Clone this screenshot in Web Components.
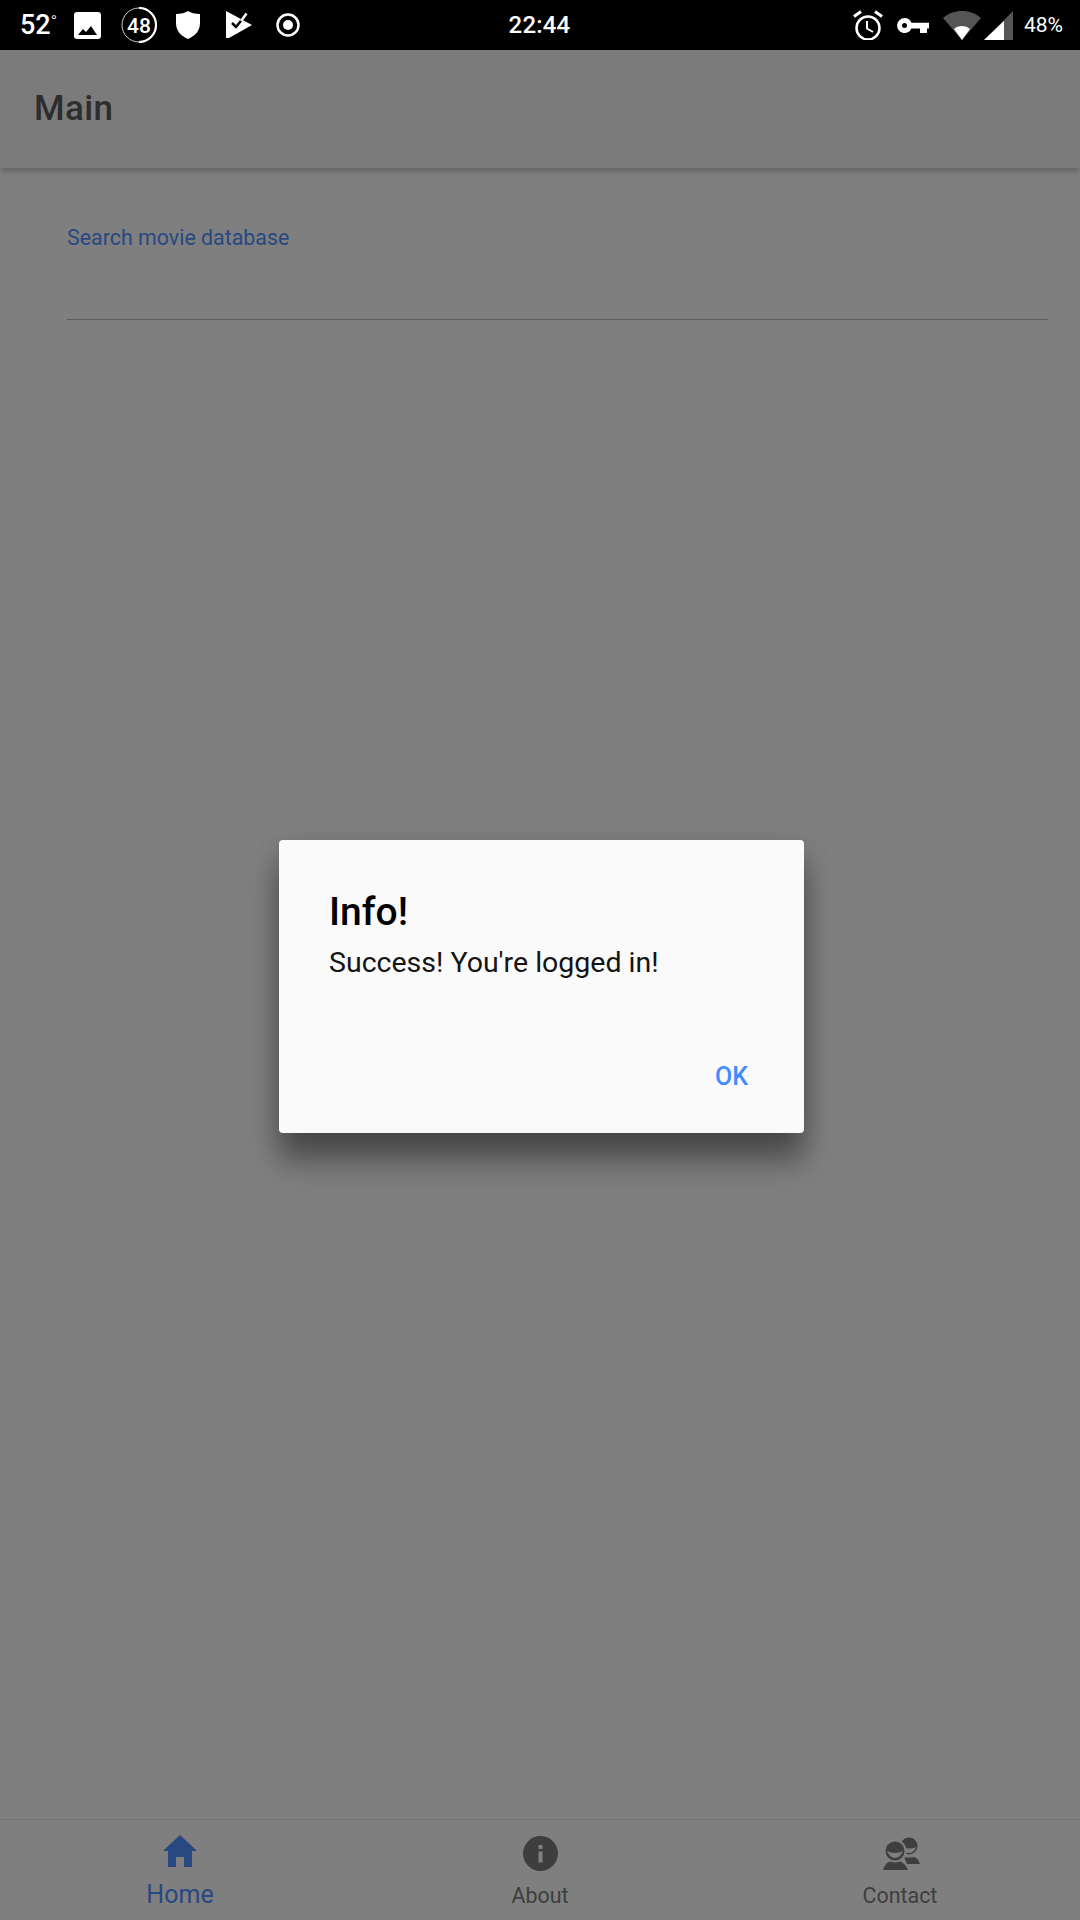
<!DOCTYPE html>
<html>
<head>
<meta charset="utf-8">
<title>Main</title>
<style>
  html, body { margin: 0; height: 100%; }
  body { background: #fafafa; font-family: Roboto, "Liberation Sans", sans-serif; }
  #app { display: flex; flex-direction: column; height: 1920px; position: relative; overflow: hidden; }
</style>
</head>
<body>
<div id="app">
  <status-bar></status-bar>
  <app-bar>Main</app-bar>
  <search-field>Search movie database</search-field>
  <bottom-nav>
    <nav-item active label="Home" style="--icon-bottom:4px">
      <svg slot="icon" width="34" height="32" viewBox="0 0 34 32"><path fill="currentColor" d="M17 0 34 16H29V32H21V22H13V32H5V16H0Z"/></svg>
    </nav-item>
    <nav-item label="About">
      <svg slot="icon" width="35" height="35" viewBox="0 0 35 35"><path fill="currentColor" fill-rule="evenodd" d="M17.500 0a17.500 17.500 0 1 0 0 35 17.500 17.500 0 0 0 0-35ZM15.500 9h4v4h-4ZM15.500 15.500h4v11h-4Z"/></svg>
    </nav-item>
    <nav-item label="Contact" style="--icon-bottom:1px">
      <svg slot="icon" style="margin-left:3px" width="38" height="33" viewBox="0 0 38 33">
        <circle cx="26" cy="9" r="8.500" fill="currentColor"/>
        <path fill="#fafafa" d="M19 10Q26 13 33 10Q31 16 26 16Q21 16 19 10Z"/>
        <path fill="currentColor" d="M21 20Q26 21 31 20Q35 21 37 27H24Z"/>
        <circle cx="12" cy="14" r="11.500" fill="#fafafa"/>
        <circle cx="12" cy="14" r="9.500" fill="currentColor"/>
        <path fill="#fafafa" d="M4 14Q12 18 20 14Q17 21 12 21Q7 21 4 14Z"/>
        <path fill="currentColor" d="M7 24.500Q12 26.500 17 24.500Q22 26 25 33H0Q2 26 7 24.500Z"/>
      </svg>
    </nav-item>
  </bottom-nav>
  <alert-dialog heading="Info!" action="OK">Success! You're logged in!</alert-dialog>
</div>

<script>
class StatusBar extends HTMLElement {
  constructor() {
    super();
    this.attachShadow({ mode: 'open' });
    this.shadowRoot.innerHTML = `
      <style>
        :host {
          display: flex;
          align-items: center;
          height: 50px;
          flex: none;
          background: #000;
          color: #fff;
          font-family: Roboto, sans-serif;
          position: relative;
          z-index: 2;
        }
        .left, .right { display: flex; align-items: center; flex: 1; }
        .right { justify-content: flex-end; padding-right: 17px; }
        .left { padding-left: 20px; }
        .temp { font-size: 27px; font-weight: 500; width: 54px; }
        .temp sup { font-size: 17px; font-weight: 300; vertical-align: 7px; line-height: 0; }
        .clock { font-size: 24px; font-weight: 500; letter-spacing: .2px; margin-right: 4px; }
        .batt { font-size: 21px; margin-left: 11px; }
        svg { display: block; flex: none; fill: #fff; }
      </style>
      <div class="left">
        <span class="temp">52<sup>°</sup></span>
        <svg width="27" height="27" viewBox="0 0 27 27"><path fill-rule="evenodd" d="M3 0h21a3 3 0 0 1 3 3v21a3 3 0 0 1-3 3H3a3 3 0 0 1-3-3V3a3 3 0 0 1 3-3ZM4 23h19l-6-9-5 6-3-3Z"/></svg>
        <svg style="margin-left:20px" width="36" height="36" viewBox="0 0 36 36">
          <circle cx="18" cy="18" r="17" fill="none" stroke="#fff" stroke-width=".8"/>
          <path d="M18 1a17 17 0 0 1 0 34" fill="none" stroke="#fff" stroke-width="2.200"/>
          <text x="18" y="25.500" text-anchor="middle" font-family="Roboto, sans-serif" font-weight="500" font-size="21">48</text>
        </svg>
        <svg style="margin-left:19px" width="24" height="28" viewBox="0 0 24 28"><path d="M12 0c3 2 7 3 12 3v9c0 8-5 13-12 16C5 25 0 20 0 12V3c5 0 9-1 12-3Z"/></svg>
        <svg style="margin-left:26px" width="27" height="28" viewBox="0 0 27 28">
          <path d="M0 0 26 14 3 27 0 27Z"/>
          <polyline points="6,12 10,16 16.500,8" fill="none" stroke="#000" stroke-width="2.500"/>
          <polyline points="15,10 20.500,2.500" fill="none" stroke="#fff" stroke-width="2.500"/>
        </svg>
        <svg style="margin-left:23px" width="24" height="24" viewBox="0 0 24 24"><circle cx="12" cy="12" r="10.500" fill="none" stroke="#fff" stroke-width="2.500"/><circle cx="12" cy="12" r="5"/></svg>
      </div>
      <span class="clock">22:44</span>
      <div class="right">
        <svg width="30" height="30" viewBox="0 0 30 30">
          <circle cx="15" cy="18" r="11.500" fill="none" stroke="#fff" stroke-width="2.500"/>
          <polyline points="14,11 14,18.500 20,22" fill="none" stroke="#fff" stroke-width="2"/>
          <path d="M1 6.500 8 1.500" stroke="#fff" stroke-width="3"/>
          <path d="M29 6.500 22 1.500" stroke="#fff" stroke-width="3"/>
        </svg>
        <svg style="margin-left:14px" width="32" height="15" viewBox="0 0 32 15"><path fill-rule="evenodd" d="M7.500 0a7.500 7.500 0 0 1 7 4.800H32v5.600h-2V15h-7v-4.600h-8.500A7.500 7.500 0 1 1 7.500 0Zm0 5a2.500 2.500 0 1 0 0 5 2.500 2.500 0 0 0 0-5Z"/></svg>
        <svg style="margin-left:14px" width="38" height="29" viewBox="0 0 38 29"><path fill="#555" d="M19 0c7 0 14 2.500 19 7L19 29 0 7C5 2.500 12 0 19 0Z"/><path d="M19 15c3 0 6 1 8 3L19 29 11 18c2-2 5-3 8-3Z"/></svg>
        <svg style="margin-left:3px" width="29" height="29" viewBox="0 0 29 29"><path fill="#555" d="M29 0V29H0Z"/><path d="M20 10V29H0Z"/></svg>
        <span class="batt">48%</span>
      </div>
    `;
  }
}

class AppBar extends HTMLElement {
  constructor() {
    super();
    this.attachShadow({ mode: 'open' });
    this.shadowRoot.innerHTML = `
      <style>
        :host {
          display: flex;
          align-items: center;
          flex: none;
          height: 116px;
          padding: 0 34px 2px;
          background: #f1f1f1;
          color: #585858;
          font: 500 35px Roboto, sans-serif;
          letter-spacing: .4px;
          box-shadow: 0 3px 6px rgba(0,0,0,.25);
          position: relative;
        }
      </style>
      <slot></slot>
    `;
  }
}

class SearchField extends HTMLElement {
  constructor() {
    super();
    this.attachShadow({ mode: 'open' });
    this.shadowRoot.innerHTML = `
      <style>
        :host {
          display: block;
          flex: none;
          margin: 57px 32px 0 67px;
          height: 94px;
          border-bottom: 1px solid #b0b0b0;
          color: #4f8dff;
          font: 21.400px/25px Roboto, sans-serif;
        }
      </style>
      <slot></slot>
    `;
  }
}

class BottomNav extends HTMLElement {
  constructor() {
    super();
    this.attachShadow({ mode: 'open' });
    this.shadowRoot.innerHTML = `
      <style>
        :host {
          display: grid;
          grid-template-columns: repeat(3, 1fr);
          margin-top: auto;
          height: 101px;
          flex: none;
          border-top: 1px solid #e8e8e8;
          box-sizing: border-box;
        }
      </style>
      <slot></slot>
    `;
  }
}

class NavItem extends HTMLElement {
  constructor() {
    super();
    this.attachShadow({ mode: 'open' });
    this.shadowRoot.innerHTML = `
      <style>
        :host {
          display: flex;
          flex-direction: column;
          align-items: center;
          color: #7a7a7a;
          font: 21.400px/25px Roboto, sans-serif;
        }
        :host([active]) { color: #4f8dff; font-size: 25px; }
        .icon {
          box-sizing: border-box;
          height: 51px;
          padding-bottom: var(--icon-bottom, 0);
          display: flex;
          align-items: flex-end;
          margin-bottom: 12px;
        }
        :host([active]) .icon { margin-bottom: 11px; }
        ::slotted(svg) { display: block; }
      </style>
      <div class="icon"><slot name="icon"></slot></div>
      <span id="label"></span>
    `;
  }

  connectedCallback() {
    this.shadowRoot.querySelector('#label').textContent = this.getAttribute('label');
  }
}

class AlertDialog extends HTMLElement {
  constructor() {
    super();
    this.attachShadow({ mode: 'open' });
    this.shadowRoot.innerHTML = `
      <style>
        :host {
          position: absolute;
          top: 50px;
          left: 0;
          right: 0;
          bottom: 0;
          display: flex;
          align-items: center;
          justify-content: center;
          background: rgba(0,0,0,.49);
          font-family: Roboto, sans-serif;
        }
        .box {
          width: 525px;
          height: 293px;
          margin: 2px 0 0 3px;
          box-sizing: border-box;
          padding: 49px 50px 0;
          background: #fafafa;
          border-radius: 4px;
          box-shadow: 0 28px 30px rgba(0,0,0,.38), 0 6px 26px rgba(0,0,0,.14);
          display: flex;
          flex-direction: column;
        }
        h2 { margin: 0; font-size: 39px; line-height: 46px; font-weight: 500; color: #000; }
        p { margin: 10px 0 0; font-size: 28.500px; line-height: 36px; color: #141414; }
        button {
          margin-top: auto;
          margin-bottom: 41px;
          align-self: flex-end;
          margin-right: 6px;
          border: 0;
          padding: 0;
          background: none;
          color: #448aff;
          font: 500 25px/30px Roboto, sans-serif;
        }
      </style>
      <div class="box">
        <h2 id="title"></h2>
        <p><slot></slot></p>
        <button id="action"></button>
      </div>
    `;
  }

  connectedCallback() {
    this.shadowRoot.querySelector('#title').textContent = this.getAttribute('heading');
    this.shadowRoot.querySelector('#action').textContent = this.getAttribute('action');
  }
}

customElements.define('status-bar', StatusBar);
customElements.define('app-bar', AppBar);
customElements.define('search-field', SearchField);
customElements.define('bottom-nav', BottomNav);
customElements.define('nav-item', NavItem);
customElements.define('alert-dialog', AlertDialog);
</script>
</body>
</html>
